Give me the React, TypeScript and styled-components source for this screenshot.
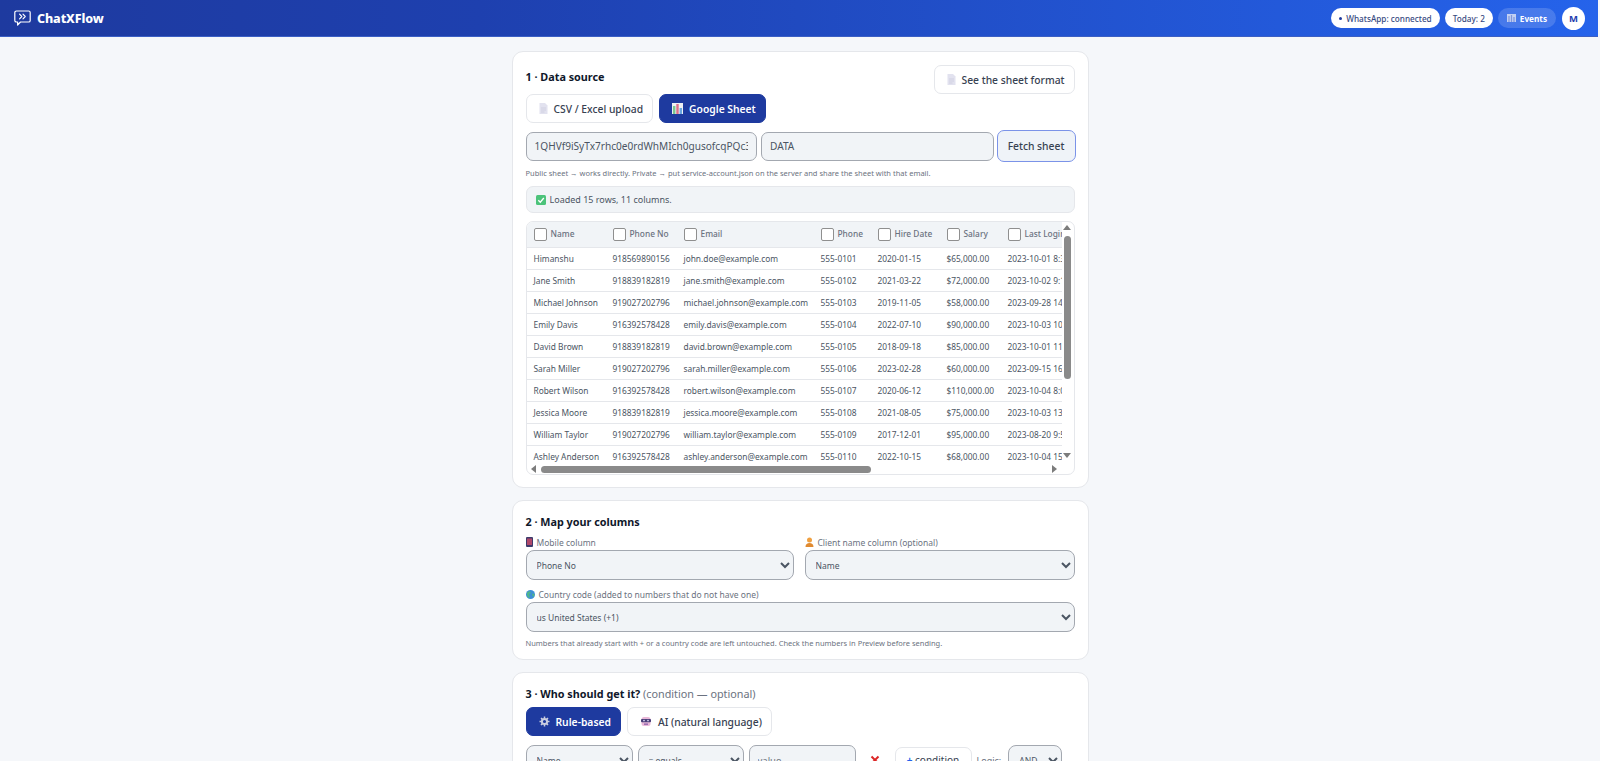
import * as React from 'react';
import styled, { createGlobalStyle } from 'styled-components';

const GlobalStyle = createGlobalStyle`
  html, body {
    margin: 0;
    height: 100%;
    overflow: hidden;
    background: #f5f7fa;
    font-family: "Noto Sans", "Liberation Sans", sans-serif;
  }
  * { box-sizing: border-box; }
`;

const Page = styled.div`
  height: 761px;
  overflow: hidden;
`;

const TopBar = styled.header`
  width: calc(100% - 2px);
  height: 37px;
  padding: 0 13px 0 14px;
  display: flex;
  align-items: center;
  justify-content: space-between;
  background: linear-gradient(90deg, #1e3a9f 0%, #1e40af 30%, #2563eb 100%);
  border-bottom: 1px solid #3b5fc4;
`;

const Brand = styled.div`
  display: flex;
  align-items: center;
  gap: 6px;
  color: #fff;
  font-size: 12.5px;
  font-weight: 800;
  letter-spacing: -0.1px;
`;

const TopActions = styled.div`
  display: flex;
  align-items: center;
  gap: 5px;
`;

const Pill = styled.span<{ $ghost?: boolean }>`
  height: 20px;
  padding: 0 ${(p) => (p.$ghost ? '9px' : '8px')};
  display: inline-flex;
  align-items: center;
  gap: 4px;
  border-radius: 10px;
  font-size: 8.2px;
  font-weight: ${(p) => (p.$ghost ? 700 : 500)};
  white-space: nowrap;
  background: ${(p) => (p.$ghost ? 'rgba(255,255,255,0.16)' : '#fff')};
  color: ${(p) => (p.$ghost ? '#fff' : '#374a7f')};
`;

const Dot = styled.i`
  width: 3px;
  height: 3px;
  border-radius: 50%;
  background: #1e3a9f;
`;

const Avatar = styled.span`
  width: 23px;
  height: 23px;
  border-radius: 50%;
  margin-left: 1px;
  background: #fff;
  color: #1e40af;
  font-size: 9.5px;
  font-weight: 700;
  display: flex;
  align-items: center;
  justify-content: center;
`;

const Main = styled.main`
  width: 577px;
  margin: 14px auto 0;
  display: flex;
  flex-direction: column;
  gap: 12px;
`;

const Card = styled.section<{ $pb: number }>`
  background: #fff;
  border: 1px solid #e5e7eb;
  border-radius: 11px;
  padding: 13px 13px ${(p) => p.$pb}px;
`;

const TitleRow = styled.div`
  display: flex;
  justify-content: space-between;
  align-items: flex-start;
`;

const Title = styled.h2<{ $mt?: number; $mb?: number }>`
  margin: ${(p) => p.$mt ?? 0}px 0 ${(p) => p.$mb ?? 0}px;
  font-size: 10.8px;
  line-height: 16px;
  font-weight: 700;
  color: #0f172a;
`;

const Muted = styled.span`
  font-weight: 400;
  color: #6b7280;
`;

const TabRow = styled.div`
  display: flex;
  gap: 6px;
`;

const Tab = styled.button<{ $active?: boolean }>`
  height: 29px;
  padding: 0 9px 0 12px;
  display: inline-flex;
  align-items: center;
  gap: 6px;
  font: inherit;
  font-size: 10.3px;
  font-weight: ${(p) => (p.$active ? 600 : 500)};
  border-radius: 7px;
  border: 1px solid ${(p) => (p.$active ? '#1e3a9f' : '#e5e7eb')};
  background: ${(p) => (p.$active ? '#1e3a9f' : '#fff')};
  color: ${(p) => (p.$active ? '#fff' : '#374151')};
  white-space: nowrap;
`;

const FieldRow = styled.div`
  margin: 7px -1px 0 0;
  display: flex;
  align-items: center;
  gap: 4px;
`;

const TextField = styled.input<{ $grow: number }>`
  flex: ${(p) => p.$grow} 1 0;
  min-width: 0;
  height: 29px;
  padding: 0 8px;
  font: inherit;
  font-size: 10.1px;
  color: #4b5563;
  background: #f1f4f7;
  border: 1px solid #a3a8b0;
  border-radius: 7px;
  &::placeholder { color: #6b7280; }
  &:focus { outline: none; }
`;

const FetchButton = styled.button`
  flex: none;
  width: 79px;
  height: 32px;
  margin-left: -1px;
  font: inherit;
  font-size: 10.3px;
  font-weight: 500;
  color: #374151;
  background: #eff3f8;
  border: 1px solid #7b93e8;
  border-radius: 7px;
`;

const Help = styled.p`
  margin: 5px 0 0;
  font-size: 7.5px;
  line-height: 12px;
  color: #6b7280;
`;

const StatusBox = styled.div`
  margin-top: 7px;
  height: 27px;
  padding: 0 9px;
  display: flex;
  align-items: center;
  gap: 4px;
  font-size: 9px;
  color: #4b5563;
  background: #f1f4f7;
  border: 1px solid #e5e7eb;
  border-radius: 7px;
`;

const TableFrame = styled.div`
  margin-top: 8px;
  height: 254px;
  display: grid;
  grid-template-columns: minmax(0, 1fr) 12px;
  grid-template-rows: 241px 12px;
  border: 1px solid #e5e7eb;
  border-radius: 7px;
  overflow: hidden;
`;

const TableViewport = styled.div`
  grid-column: 1;
  grid-row: 1;
  overflow: hidden;
`;

const DataTable = styled.table`
  width: 600px;
  table-layout: fixed;
  border-collapse: collapse;
  font-size: 8.35px;
  color: #4b5563;
`;

const HeadCell = styled.th`
  height: 25px;
  padding: 0 0 0 7px;
  text-align: left;
  font-weight: 500;
  color: #6b7280;
  white-space: nowrap;
  overflow: hidden;
  background: #f1f4f7;
`;

const HeadBox = styled.span`
  display: inline-block;
  width: 13px;
  height: 13px;
  margin-right: 4px;
  vertical-align: middle;
  background: #fff;
  border: 1px solid #8f8f8f;
  border-radius: 2px;
`;

const Cell = styled.td`
  height: 22px;
  padding: 0 0 0 7px;
  white-space: nowrap;
  overflow: hidden;
  border-top: 1px solid #e5e7eb;
`;

const VBar = styled.div`
  grid-column: 2;
  grid-row: 1 / 3;
  padding: 3px 1px 0 0;
  display: flex;
  flex-direction: column;
  align-items: center;
`;

const VThumb = styled.div`
  width: 7px;
  height: 143px;
  margin: 6px 0 74px;
  background: #8a8a8a;
  border-radius: 4px;
`;

const HBar = styled.div`
  grid-column: 1;
  grid-row: 2;
  padding: 0 5px 0 4px;
  display: flex;
  align-items: center;
  justify-content: space-between;
`;

const HThumb = styled.div`
  width: 330px;
  height: 7px;
  margin: 0 auto 0 5px;
  background: #8a8a8a;
  border-radius: 4px;
`;

const Arrow = styled.i<{ $dir: 'up' | 'down' | 'left' | 'right' }>`
  flex: none;
  width: 0;
  height: 0;
  border-style: solid;
  border-color: transparent;
  border-width: 4px;
  ${(p) =>
    ({
      up: 'border-top-width: 0; border-bottom: 5px solid #7c7c7c;',
      down: 'border-bottom-width: 0; border-top: 5px solid #7c7c7c;',
      left: 'border-left-width: 0; border-right: 5px solid #7c7c7c;',
      right: 'border-right-width: 0; border-left: 5px solid #7c7c7c;',
    })[p.$dir]}
`;

const MapGrid = styled.div`
  margin-top: 4px;
  display: grid;
  grid-template-columns: 268px minmax(0, 1fr);
  column-gap: 11px;
  row-gap: 6px;
`;

const Field = styled.label<{ $wide?: boolean }>`
  display: block;
  grid-column: ${(p) => (p.$wide ? '1 / 3' : 'auto')};
`;

const FieldLabel = styled.span`
  height: 16px;
  display: flex;
  align-items: center;
  gap: 4px;
  font-size: 8.5px;
  color: #6b7280;
`;

const Select = styled.select<{ $w?: number }>`
  width: ${(p) => (p.$w ? `${p.$w}px` : '100%')};
  flex: none;
  height: 30px;
  padding: 0 6px;
  font: inherit;
  font-size: 8.5px;
  color: #4b5563;
  background-color: #f1f4f7;
  border: 1px solid #a3a8b0;
  border-radius: 8px;
`;

const ConditionRow = styled.div`
  margin-top: 9px;
  display: flex;
  align-items: center;
  gap: 5px;
`;

const ValueInput = styled(TextField)`
  flex: none;
  width: 107px;
  height: 30px;
  font-size: 9.5px;
`;

const RemoveButton = styled.span`
  width: 29px;
  display: flex;
  justify-content: center;
  color: #dc2626;
`;

const AddCondition = styled.button`
  flex: none;
  width: 77px;
  height: 26px;
  font: inherit;
  font-size: 10px;
  color: #374151;
  background: #fff;
  border: 1px solid #e5e7eb;
  border-radius: 7px;
`;

const Plus = styled.b`
  color: #2563eb;
`;

const LogicLabel = styled.span`
  margin-right: 2px;
  font-size: 9px;
  color: #6b7280;
`;

const LogoIcon = () => (
  <svg width="17" height="16" viewBox="0 0 17 16" fill="none" stroke="#fff" strokeWidth="1.2" strokeLinecap="round" strokeLinejoin="round">
    <path d="M2.4 1h12.2a1.6 1.6 0 0 1 1.6 1.6v7.8a1.6 1.6 0 0 1-1.6 1.6H6.5L3.6 15v-3H2.4A1.6 1.6 0 0 1 .8 10.4V2.6A1.6 1.6 0 0 1 2.4 1z" />
    <path d="M5.6 4.2 7.8 6.5 5.6 8.8M9 4.2l2.2 2.3L9 8.8" />
  </svg>
);

const DocIcon = () => (
  <svg width="9" height="11" viewBox="0 0 9 11">
    <path d="M.5 0h5.5L8.500 2.500V11H.5z" fill="#e2e2ef" />
    <path d="M2 5h5M2 7h5M2 9h3.500" stroke="#c9c9dc" strokeWidth=".7" />
  </svg>
);

const SheetIcon = () => (
  <svg width="11" height="11" viewBox="0 0 11 11">
    <rect width="11" height="11" fill="#eef0f4" />
    <rect x="1" y="3" width="2.400" height="8" fill="#7bc88f" />
    <rect x="4.300" y="1" width="2.400" height="10" fill="#e0708a" />
    <rect x="7.600" y="5" width="2.400" height="6" fill="#6aa8e0" />
  </svg>
);

const CheckIcon = () => (
  <svg width="10" height="10" viewBox="0 0 10 10">
    <rect width="10" height="10" rx="1.500" fill="#4cc37a" />
    <path d="M2.300 5.200 4.300 7.200 7.800 3" fill="none" stroke="#fff" strokeWidth="1.300" />
  </svg>
);

const PhoneIcon = () => (
  <svg width="7" height="10" viewBox="0 0 7 10">
    <rect width="7" height="10" rx="1" fill="#3d3a6b" />
    <rect x="1" y="1.500" width="5" height="6.500" fill="#b0486a" />
  </svg>
);

const PersonIcon = () => (
  <svg width="9" height="10" viewBox="0 0 9 10">
    <circle cx="4.500" cy="3" r="2.500" fill="#f0a040" />
    <path d="M.5 10c0-3 1.800-4 4-4s4 1 4 4z" fill="#e08a30" />
  </svg>
);

const GlobeIcon = () => (
  <svg width="9" height="9" viewBox="0 0 9 9">
    <circle cx="4.500" cy="4.500" r="4.500" fill="#3d8fd8" />
    <path d="M1 2.500 3.500 1l1.500 2-2 1.500 1 2.500-1.500 1L1 5.500zM6 3.500l2.500.5L8 7 6.500 6z" fill="#4fb58a" />
  </svg>
);

const GearIcon = () => (
  <svg width="11" height="11" viewBox="0 0 11 11" fill="none" stroke="#c9cde0">
    <circle cx="5.500" cy="5.500" r="2.600" strokeWidth="2" />
    <path d="M5.500.5v2M5.500 8.500v2M.5 5.500h2M8.500 5.500h2M2 2l1.400 1.400M7.600 7.600 9 9M9 2 7.600 3.400M3.400 7.600 2 9" strokeWidth="1.500" />
  </svg>
);

const RobotIcon = () => (
  <svg width="12" height="11" viewBox="0 0 12 11">
    <rect x="1.500" y="1" width="9" height="9" rx="2.500" fill="#e9b8d8" />
    <rect x="1" y="3" width="10" height="3.200" rx="1" fill="#4a3f7a" />
    <circle cx="4" cy="4.600" r=".8" fill="#e8e8ff" />
    <circle cx="8" cy="4.600" r=".8" fill="#e8e8ff" />
    <rect x="4" y="7.500" width="4" height="1.300" fill="#8a5fa8" />
  </svg>
);

const EventsIcon = () => (
  <svg width="9" height="8" viewBox="0 0 9 8">
    <rect width="9" height="8" fill="#c3d0f2" />
    <path d="M2 2v6M4.500 1v7M7 3v5" stroke="#7f97dc" strokeWidth="1.200" />
  </svg>
);

const CrossIcon = () => (
  <svg width="10" height="10" viewBox="0 0 10 10" fill="none" stroke="currentColor" strokeWidth="2">
    <path d="M1.500 1.500l7 7M8.500 1.500l-7 7" />
  </svg>
);

const columns = [
  { label: 'Name', width: 79 },
  { label: 'Phone No', width: 71 },
  { label: 'Email', width: 137 },
  { label: 'Phone', width: 57 },
  { label: 'Hire Date', width: 69 },
  { label: 'Salary', width: 61 },
  { label: 'Last Login', width: 126 },
];

const rows = [
  ['Himanshu', '918569890156', 'john.doe@example.com', '555-0101', '2020-01-15', '$65,000.00', '2023-10-01 8:30:00'],
  ['Jane Smith', '918839182819', 'jane.smith@example.com', '555-0102', '2021-03-22', '$72,000.00', '2023-10-02 9:15:00'],
  ['Michael Johnson', '919027202796', 'michael.johnson@example.com', '555-0103', '2019-11-05', '$58,000.00', '2023-09-28 14:20:00'],
  ['Emily Davis', '916392578428', 'emily.davis@example.com', '555-0104', '2022-07-10', '$90,000.00', '2023-10-03 10:05:00'],
  ['David Brown', '918839182819', 'david.brown@example.com', '555-0105', '2018-09-18', '$85,000.00', '2023-10-01 11:45:00'],
  ['Sarah Miller', '919027202796', 'sarah.miller@example.com', '555-0106', '2023-02-28', '$60,000.00', '2023-09-15 16:30:00'],
  ['Robert Wilson', '916392578428', 'robert.wilson@example.com', '555-0107', '2020-06-12', '$110,000.00', '2023-10-04 8:00:00'],
  ['Jessica Moore', '918839182819', 'jessica.moore@example.com', '555-0108', '2021-08-05', '$75,000.00', '2023-10-03 13:10:00'],
  ['William Taylor', '919027202796', 'william.taylor@example.com', '555-0109', '2017-12-01', '$95,000.00', '2023-08-20 9:55:00'],
  ['Ashley Anderson', '916392578428', 'ashley.anderson@example.com', '555-0110', '2022-10-15', '$68,000.00', '2023-10-04 15:40:00'],
];

export default function App() {
  return (
    <Page>
      <GlobalStyle />
      <TopBar>
        <Brand>
          <LogoIcon />
          ChatXFlow
        </Brand>
        <TopActions>
          <Pill><Dot />WhatsApp: connected</Pill>
          <Pill>Today: 2</Pill>
          <Pill $ghost><EventsIcon />Events</Pill>
          <Avatar>M</Avatar>
        </TopActions>
      </TopBar>
      <Main>
        <Card $pb={12}>
          <TitleRow>
            <Title $mt={4}>1 · Data source</Title>
            <Tab><DocIcon />See the sheet format</Tab>
          </TitleRow>
          <TabRow>
            <Tab><DocIcon />CSV / Excel upload</Tab>
            <Tab $active><SheetIcon />Google Sheet</Tab>
          </TabRow>
          <FieldRow>
            <TextField $grow={231} readOnly value="1QHVf9iSyTx7rhc0e0rdWhMIch0gusofcqPQc3kLm8Zt" />
            <TextField $grow={232} readOnly value="DATA" />
            <FetchButton>Fetch sheet</FetchButton>
          </FieldRow>
          <Help>Public sheet → works directly. Private → put service-account.json on the server and share the sheet with that email.</Help>
          <StatusBox><CheckIcon />Loaded 15 rows, 11 columns.</StatusBox>
          <TableFrame>
            <TableViewport>
              <DataTable>
                <colgroup>
                  {columns.map((c) => <col key={c.label} width={c.width} />)}
                </colgroup>
                <thead>
                  <tr>
                    {columns.map((c) => (
                      <HeadCell key={c.label}><HeadBox />{c.label}</HeadCell>
                    ))}
                  </tr>
                </thead>
                <tbody>
                  {rows.map((row) => (
                    <tr key={row[0]}>
                      {row.map((v, i) => <Cell key={i}>{v}</Cell>)}
                    </tr>
                  ))}
                </tbody>
              </DataTable>
            </TableViewport>
            <VBar>
              <Arrow $dir="up" />
              <VThumb />
              <Arrow $dir="down" />
            </VBar>
            <HBar>
              <Arrow $dir="left" />
              <HThumb />
              <Arrow $dir="right" />
            </HBar>
          </TableFrame>
        </Card>

        <Card $pb={10}>
          <Title>2 · Map your columns</Title>
          <MapGrid>
            <Field>
              <FieldLabel><PhoneIcon />Mobile column</FieldLabel>
              <Select defaultValue="Phone No"><option>Phone No</option></Select>
            </Field>
            <Field>
              <FieldLabel><PersonIcon />Client name column (optional)</FieldLabel>
              <Select defaultValue="Name"><option>Name</option></Select>
            </Field>
            <Field $wide>
              <FieldLabel><GlobeIcon />Country code (added to numbers that do not have one)</FieldLabel>
              <Select defaultValue="us"><option value="us">us United States (+1)</option></Select>
            </Field>
          </MapGrid>
          <Help>Numbers that already start with + or a country code are left untouched. Check the numbers in Preview before sending.</Help>
        </Card>

        <Card $pb={13}>
          <Title $mb={5}>3 · Who should get it? <Muted>(condition — optional)</Muted></Title>
          <TabRow>
            <Tab $active><GearIcon />Rule-based</Tab>
            <Tab><RobotIcon />AI (natural language)</Tab>
          </TabRow>
          <ConditionRow>
            <Select $w={107} defaultValue="Name"><option>Name</option></Select>
            <Select $w={106} defaultValue="eq"><option value="eq">= equals</option></Select>
            <ValueInput $grow={0} placeholder="value" />
            <RemoveButton><CrossIcon /></RemoveButton>
            <AddCondition><Plus>+</Plus> condition</AddCondition>
            <LogicLabel>Logic:</LogicLabel>
            <Select $w={54} defaultValue="AND"><option>AND</option></Select>
          </ConditionRow>
        </Card>
      </Main>
    </Page>
  );
}
